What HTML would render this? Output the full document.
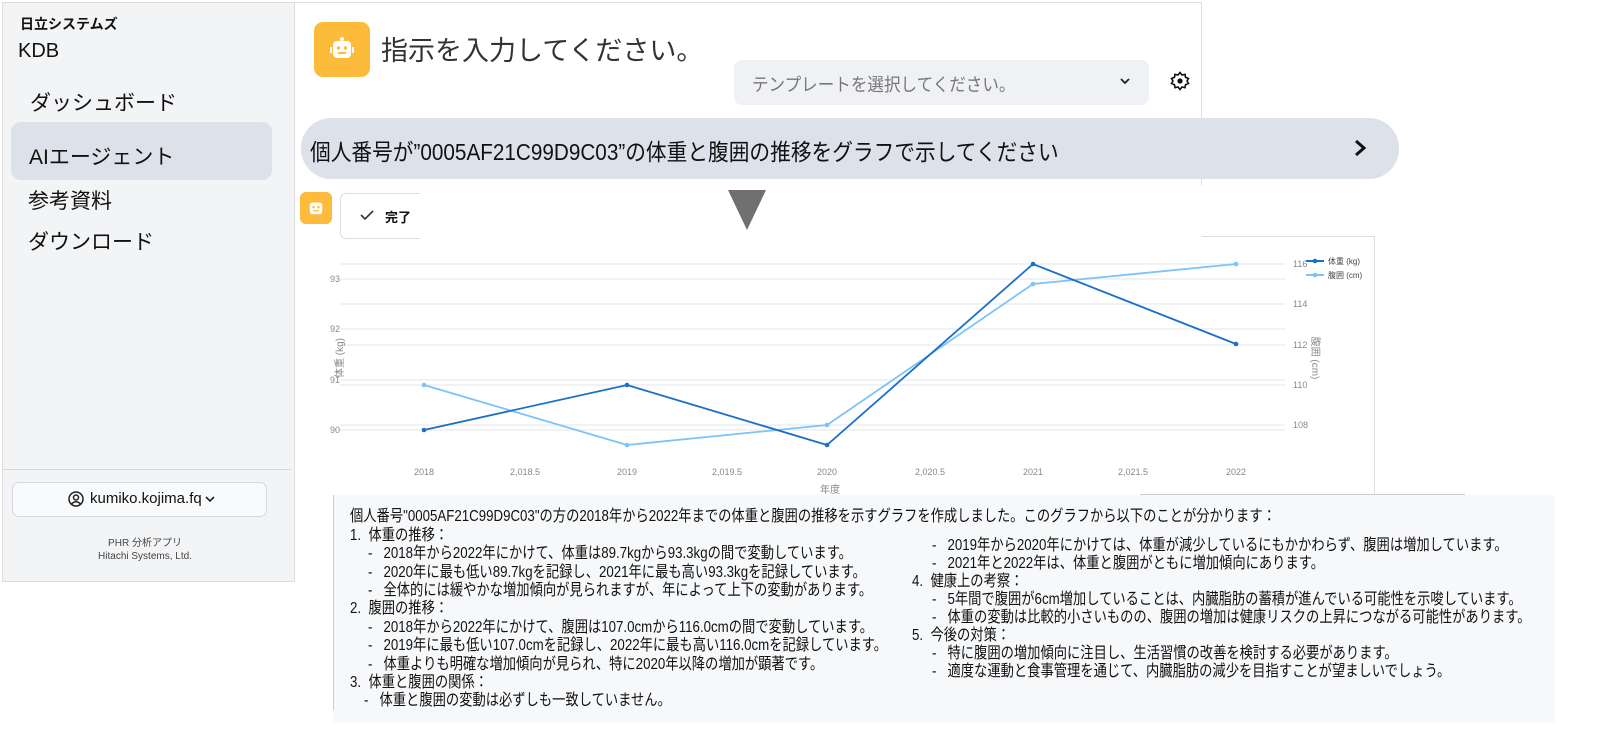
<!DOCTYPE html>
<html><head><meta charset="utf-8"><style>
body{margin:0;width:1600px;height:733px;background:#fff;position:relative;overflow:hidden;font-family:"Liberation Sans","Noto Sans CJK JP",sans-serif;color:#111}
.a{position:absolute;white-space:nowrap}
.t{position:absolute;white-space:nowrap;font-size:16px;line-height:18px;color:#111;transform-origin:0 0;transform:scaleX(.83)}
</style></head><body>
<!-- sidebar -->
<div class="a" style="left:2px;top:2px;width:293px;height:580px;background:#f3f4f6;border:1px solid #ddd;box-sizing:border-box"></div>
<div class="a" style="left:20px;top:14px;font-size:14px;font-weight:bold">日立システムズ</div>
<div class="a" style="left:18px;top:40px;font-size:20px">KDB</div>
<div class="a" style="left:30px;top:87px;font-size:21px">ダッシュボード</div>
<div class="a" style="left:11px;top:122px;width:261px;height:58px;background:#dde1ea;border-radius:10px"></div>
<div class="a" style="left:29px;top:141px;font-size:21px">AIエージェント</div>
<div class="a" style="left:28px;top:185px;font-size:21px">参考資料</div>
<div class="a" style="left:28px;top:226px;font-size:21px">ダウンロード</div>
<div class="a" style="left:3px;top:469px;width:288px;height:1px;background:#d5d7dc"></div>
<div class="a" style="left:12px;top:482px;width:255px;height:35px;background:#f9fafb;border:1px solid #d6d8dd;border-radius:7px;box-sizing:border-box"></div>
<svg class="a" style="left:68px;top:491px" width="16" height="16" viewBox="0 0 16 16"><circle cx="8" cy="8" r="7" fill="none" stroke="#222" stroke-width="1.5"/><circle cx="8" cy="6.5" r="2.5" fill="none" stroke="#222" stroke-width="1.5"/><path d="M3.5 13 Q8 8.5 12.5 13" fill="none" stroke="#222" stroke-width="1.5"/></svg>
<div class="a" style="left:90px;top:490px;font-size:15px">kumiko.kojima.fq</div>
<svg class="a" style="left:204px;top:494px" width="12" height="10"><path d="M2 3 L6 7 L10 3" fill="none" stroke="#222" stroke-width="1.6"/></svg>
<div class="a" style="left:0;width:290px;text-align:center;top:534px;font-size:10px;color:#444">PHR 分析アプリ</div>
<div class="a" style="left:0;width:290px;text-align:center;top:551px;font-size:10px;color:#444">Hitachi Systems, Ltd.</div>
<!-- main header panel -->
<div class="a" style="left:295px;top:2px;width:907px;height:236px;border-right:1px solid #ddd;border-top:1px solid #ddd;box-sizing:border-box"></div>
<div class="a" style="left:314px;top:22px;width:56px;height:55px;background:#fdbb3b;border-radius:9px"></div>
<svg class="a" style="left:330px;top:36px" width="24" height="26" viewBox="0 0 24 26"><rect x="3" y="5" width="18" height="17" rx="4" fill="#fff"/><circle cx="12" cy="3" r="2" fill="#fff"/><rect x="0" y="11" width="2" height="6" fill="#fff"/><rect x="22" y="11" width="2" height="6" fill="#fff"/><circle cx="8.5" cy="12" r="1.7" fill="#fdbb3b"/><circle cx="15.5" cy="12" r="1.7" fill="#fdbb3b"/><rect x="8" y="16" width="8" height="2" fill="#fdbb3b"/></svg>
<div class="a" style="left:381px;top:29px;font-size:27px;color:#333">指示を入力してください。</div>
<div class="a" style="left:734px;top:60px;width:415px;height:45px;background:#f0f1f5;border-radius:8px"></div>
<div class="a" style="left:752px;top:71px;font-size:18px;color:#777;transform-origin:0 0;transform:scaleX(.92)">テンプレートを選択してください。</div>
<svg class="a" style="left:1119px;top:76px" width="12" height="10"><path d="M2 3 L6 7 L10 3" fill="none" stroke="#222" stroke-width="1.8"/></svg>
<svg class="a" style="left:1170px;top:71px" width="20" height="20" viewBox="0 0 20 20"><path d="M10 1.5 L12 4 L15 3.3 L15.5 6.3 L18.5 7.5 L17 10 L18.5 12.5 L15.5 13.7 L15 16.7 L12 16 L10 18.5 L8 16 L5 16.7 L4.5 13.7 L1.5 12.5 L3 10 L1.5 7.5 L4.5 6.3 L5 3.3 L8 4 Z" fill="none" stroke="#111" stroke-width="1.6"/><circle cx="10" cy="10" r="2.6" fill="#111"/></svg>
<div class="a" style="left:301px;top:118px;width:1098px;height:61px;background:#dde1ea;border-radius:30px"></div>
<div class="a" style="left:310px;top:133px;font-size:23px;transform-origin:0 0;transform:scaleX(.9)">個人番号が”0005AF21C99D9C03”の体重と腹囲の推移をグラフで示してください</div>
<svg class="a" style="left:1352px;top:138px" width="16" height="20"><path d="M4 3 L12 10 L4 17" fill="none" stroke="#111" stroke-width="3"/></svg>
<div class="a" style="left:300px;top:192px;width:32px;height:32px;background:#fdbb3b;border-radius:6px"></div>
<svg class="a" style="left:307px;top:199px" width="18" height="18" viewBox="0 0 24 26"><rect x="3" y="5" width="18" height="17" rx="4" fill="#fff"/><circle cx="8.5" cy="12" r="1.8" fill="#fdbb3b"/><circle cx="15.5" cy="12" r="1.8" fill="#fdbb3b"/><rect x="8" y="16" width="8" height="2" fill="#fdbb3b"/></svg>
<div class="a" style="left:340px;top:193px;width:120px;height:46px;border:1px solid #ddd;border-radius:6px;box-sizing:border-box"></div>
<div class="a" style="left:420px;top:185px;width:790px;height:60px;background:#fff"></div>
<svg class="a" style="left:360px;top:209px" width="14" height="12"><path d="M1 6 L5 10 L13 2" fill="none" stroke="#333" stroke-width="1.6"/></svg>
<div class="a" style="left:385px;top:207px;font-size:13px;font-weight:bold">完了</div>
<svg class="a" style="left:728px;top:190px" width="38" height="40"><path d="M0 0 L38 0 L19 40 Z" fill="#707070"/></svg>
<!-- chart -->
<div class="a" style="left:1202px;top:236px;width:173px;height:260px;border-right:1px solid #ddd;border-top:1px solid #ddd;box-sizing:border-box"></div>
<svg class="a" style="left:300px;top:240px" width="1080" height="260">
<g stroke="#e8eaf0" stroke-width="1.2">
<line x1="40" x2="985" y1="39" y2="39"/><line x1="40" x2="985" y1="89" y2="89"/><line x1="40" x2="985" y1="140" y2="140"/><line x1="40" x2="985" y1="190" y2="190"/>
<line x1="40" x2="985" y1="24" y2="24"/><line x1="40" x2="985" y1="64" y2="64"/><line x1="40" x2="985" y1="105" y2="105"/><line x1="40" x2="985" y1="145" y2="145"/><line x1="40" x2="985" y1="185" y2="185"/>
</g>
<g font-size="9" fill="#888" font-family="Liberation Sans,sans-serif">
<text x="40" y="42" text-anchor="end">93</text><text x="40" y="92" text-anchor="end">92</text><text x="40" y="143" text-anchor="end">91</text><text x="40" y="193" text-anchor="end">90</text>
<text x="993" y="27">116</text><text x="993" y="67">114</text><text x="993" y="108">112</text><text x="993" y="148">110</text><text x="993" y="188">108</text>
<g text-anchor="middle"><text x="124" y="235">2018</text><text x="225" y="235">2,018.5</text><text x="327" y="235">2019</text><text x="427" y="235">2,019.5</text><text x="527" y="235">2020</text><text x="630" y="235">2,020.5</text><text x="733" y="235">2021</text><text x="833" y="235">2,021.5</text><text x="936" y="235">2022</text></g>
<text x="530" y="253" text-anchor="middle" font-size="10">年度</text>
<text transform="translate(43,118) rotate(-90)" text-anchor="middle" font-size="10">体重 (kg)</text>
<text transform="translate(1012,118) rotate(90)" text-anchor="middle" font-size="10">腹囲 (cm)</text>
</g>
<polyline points="124,145 327,205 527,185 733,44 936,24" fill="none" stroke="#7cc4f8" stroke-width="1.8"/>
<polyline points="124,190 327,145 527,205 733,24 936,104" fill="none" stroke="#1a6fc9" stroke-width="1.8"/>
<g fill="#7cc4f8"><circle cx="124" cy="145" r="2.3"/><circle cx="327" cy="205" r="2.3"/><circle cx="527" cy="185" r="2.3"/><circle cx="733" cy="44" r="2.3"/><circle cx="936" cy="24" r="2.3"/></g>
<g fill="#1a6fc9"><circle cx="124" cy="190" r="2.3"/><circle cx="327" cy="145" r="2.3"/><circle cx="527" cy="205" r="2.3"/><circle cx="733" cy="24" r="2.3"/><circle cx="936" cy="104" r="2.3"/></g>
<line x1="1006" x2="1024" y1="21" y2="21" stroke="#1a6fc9" stroke-width="2"/><circle cx="1015" cy="21" r="2.3" fill="#1a6fc9"/>
<line x1="1006" x2="1024" y1="35" y2="35" stroke="#7cc4f8" stroke-width="2"/><circle cx="1015" cy="35" r="2.3" fill="#7cc4f8"/>
<g font-size="8" fill="#444"><text x="1028" y="24">体重 (kg)</text><text x="1028" y="38">腹囲 (cm)</text></g>
</svg>
<!-- text panel -->
<div class="a" style="left:1140px;top:494px;width:325px;height:1px;background:#ccc"></div>
<div class="a" style="left:333px;top:495px;width:1222px;height:228px;background:#f7f8fa"></div>
<div class="a" style="left:333px;top:495px;width:1px;height:215px;background:#ccc"></div>
<div class="t" style="left:350px;top:508px">個人番号"0005AF21C99D9C03"の方の2018年から2022年までの体重と腹囲の推移を示すグラフを作成しました。このグラフから以下のことが分かります：</div>
<div class="t" style="left:350px;top:527px">1.&nbsp; 体重の推移：</div>
<div class="t" style="left:368px;top:545px">-&nbsp;&nbsp; 2018年から2022年にかけて、体重は89.7kgから93.3kgの間で変動しています。</div>
<div class="t" style="left:368px;top:564px">-&nbsp;&nbsp; 2020年に最も低い89.7kgを記録し、2021年に最も高い93.3kgを記録しています。</div>
<div class="t" style="left:368px;top:582px">-&nbsp;&nbsp; 全体的には緩やかな増加傾向が見られますが、年によって上下の変動があります。</div>
<div class="t" style="left:350px;top:600px">2.&nbsp; 腹囲の推移：</div>
<div class="t" style="left:368px;top:619px">-&nbsp;&nbsp; 2018年から2022年にかけて、腹囲は107.0cmから116.0cmの間で変動しています。</div>
<div class="t" style="left:368px;top:637px">-&nbsp;&nbsp; 2019年に最も低い107.0cmを記録し、2022年に最も高い116.0cmを記録しています。</div>
<div class="t" style="left:368px;top:656px">-&nbsp;&nbsp; 体重よりも明確な増加傾向が見られ、特に2020年以降の増加が顕著です。</div>
<div class="t" style="left:350px;top:674px">3.&nbsp; 体重と腹囲の関係：</div>
<div class="t" style="left:364px;top:692px">-&nbsp;&nbsp; 体重と腹囲の変動は必ずしも一致していません。</div>
<div class="t" style="left:932px;top:537px">-&nbsp;&nbsp; 2019年から2020年にかけては、体重が減少しているにもかかわらず、腹囲は増加しています。</div>
<div class="t" style="left:932px;top:555px">-&nbsp;&nbsp; 2021年と2022年は、体重と腹囲がともに増加傾向にあります。</div>
<div class="t" style="left:912px;top:573px">4.&nbsp; 健康上の考察：</div>
<div class="t" style="left:932px;top:591px">-&nbsp;&nbsp; 5年間で腹囲が6cm増加していることは、内臓脂肪の蓄積が進んでいる可能性を示唆しています。</div>
<div class="t" style="left:932px;top:609px">-&nbsp;&nbsp; 体重の変動は比較的小さいものの、腹囲の増加は健康リスクの上昇につながる可能性があります。</div>
<div class="t" style="left:912px;top:627px">5.&nbsp; 今後の対策：</div>
<div class="t" style="left:932px;top:645px">-&nbsp;&nbsp; 特に腹囲の増加傾向に注目し、生活習慣の改善を検討する必要があります。</div>
<div class="t" style="left:932px;top:663px">-&nbsp;&nbsp; 適度な運動と食事管理を通じて、内臓脂肪の減少を目指すことが望ましいでしょう。</div>
</body></html>
